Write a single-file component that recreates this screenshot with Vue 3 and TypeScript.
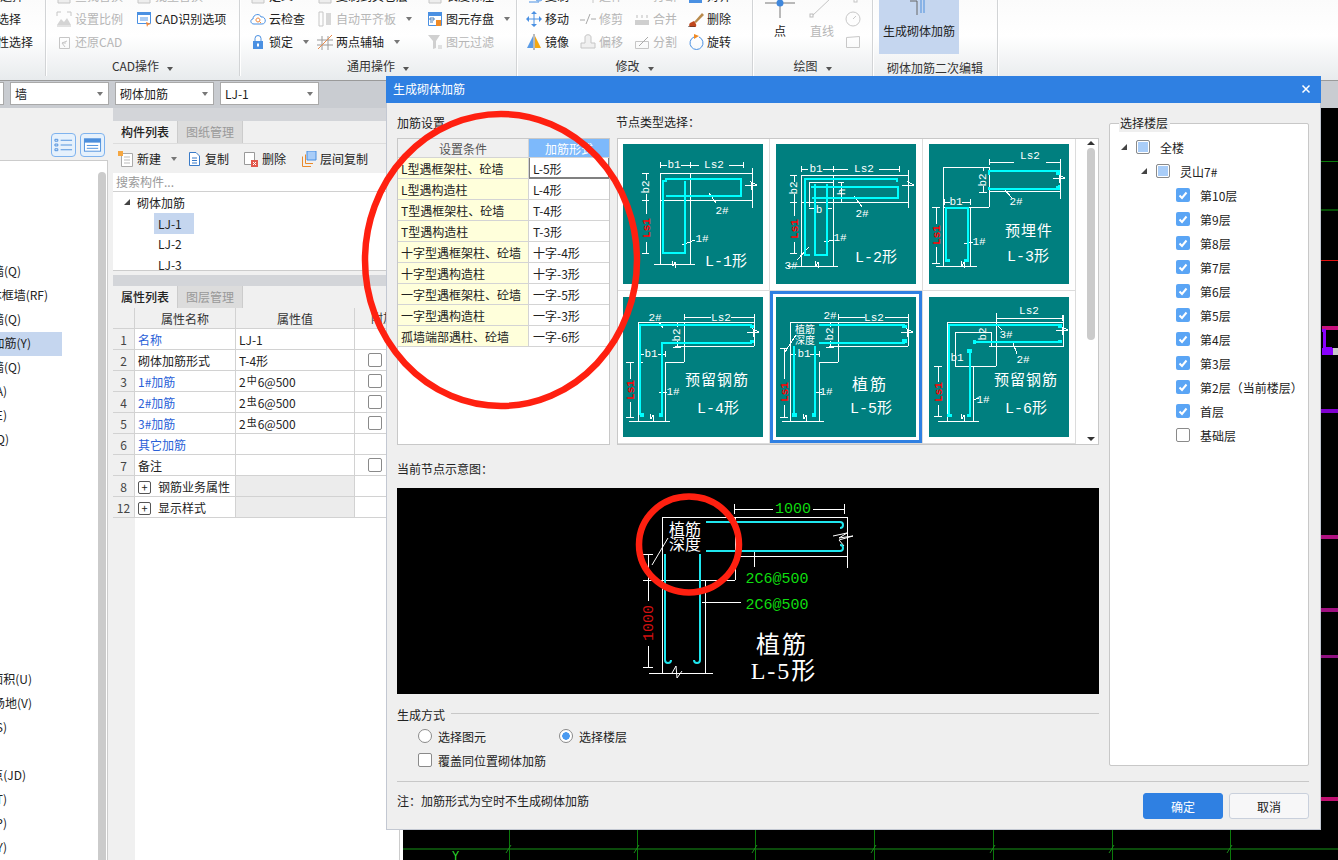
<template>
  <div class="app">
    <header class="ribbon">
      <section v-for="group in ribbonGroups" :key="group.label" class="rib-group" :style="{ width: group.width + 'px' }">
        <div class="rib-tools" :style="{ paddingLeft: group.pad + 'px', gridTemplateColumns: group.cols }">
          <div v-for="tool in group.tools" :key="tool.text" class="tool" :class="{ off: tool.off }">
            <svg class="tool-icon" viewBox="0 0 16 16">
              <path v-for="(s, i) in icons[tool.icon]" :key="i" :d="s.d" :fill="s.f || 'none'" :stroke="s.s || 'none'" />
            </svg>
            <span>{{ tool.text }}</span>
            <i v-if="tool.arrow" class="caret"></i>
          </div>
        </div>
        <div class="rib-label">{{ group.label }}<i class="caret dark"></i></div>
      </section>

      <section class="rib-group first-group" style="order: -1">
        <div class="clip-tools">
          <div v-for="row in firstGroup" :key="row.text" class="clip-row" :style="{ width: row.end + 'px' }">{{ row.text }}</div>
        </div>
      </section>

      <section class="rib-group draw-group">
        <div class="draw-tools">
          <div class="draw-big point">
            <svg viewBox="0 0 30 20" class="draw-icon">
              <path d="M0 3H30M15 3V18" stroke="#777" fill="none" />
              <circle cx="15" cy="3" r="3.500" fill="#3f87dc" />
            </svg>
            <span>点</span>
          </div>
          <div class="draw-big line off">
            <svg viewBox="0 0 30 20" class="draw-icon">
              <path d="M5 16L24 -2" stroke="#c4c4c4" fill="none" />
              <rect x="3" y="14" width="3" height="3" fill="#fff" stroke="#bbb" />
            </svg>
            <span>直线</span>
          </div>
          <div class="draw-small">
            <svg viewBox="0 0 16 16" class="mini"><rect x="9" y="11" width="3" height="3" fill="#fff" stroke="#c4c4c4" /></svg>
            <svg viewBox="0 0 16 16" class="mini"><circle cx="8" cy="8" r="7" fill="none" stroke="#c8c8c8" /><path d="M8 8L11 5" stroke="#c8c8c8" /></svg>
            <svg viewBox="0 0 16 16" class="mini"><path d="M1.500 3.500L14.500 2.500V13.500H1.500Z" fill="none" stroke="#c8c8c8" /></svg>
          </div>
        </div>
        <div class="rib-label">绘图<i class="caret dark"></i></div>
      </section>

      <section class="rib-group edit-group">
        <div class="edit-tool">
          <svg viewBox="0 0 80 20" class="draw-icon wide">
            <path d="M31 1H38V15" fill="none" stroke="#666" />
            <path d="M42 0V13M45 0V13" fill="none" stroke="#4d8fdc" />
          </svg>
          <span>生成砌体加筋</span>
        </div>
        <div class="rib-label edit-label">砌体加筋二次编辑</div>
      </section>
    </header>

    <div class="combo-bar">
      <div class="combo stub"></div>
      <div v-for="combo in combos" :key="combo" class="combo">
        <span>{{ combo }}</span><i class="caret"></i>
      </div>
    </div>

    <main class="workspace">
      <aside class="sidebar">
        <div class="side-head">
          <button class="view-btn">
            <svg viewBox="0 0 20 18"><path d="M1 3h3v2H1zM1 8h3v2H1zM1 13h3v2H1z" fill="none" stroke="#4d8fdc" /><path d="M7 4h12M7 9h12M7 14h12" stroke="#4d8fdc" /></svg>
          </button>
          <button class="view-btn">
            <svg viewBox="0 0 20 18"><rect x="1.500" y="2.500" width="17" height="13" fill="#fff" stroke="#4d8fdc" /><rect x="1.500" y="2.500" width="17" height="4" fill="#4d8fdc" /><path d="M4 9.500h12M4 12.500h12" stroke="#4d8fdc" /></svg>
          </button>
        </div>
        <div class="side-body">
          <div class="side-list">
            <div
              v-for="(row, i) in sideRows"
              :key="i"
              class="side-row"
              :class="{ picked: row.picked }"
            >
              <span v-if="row.text" class="side-text" :style="{ width: row.end + 'px' }">{{ row.text }}</span>
            </div>
          </div>
          <div class="side-scroll"></div>
        </div>
      </aside>

      <section class="panel">
        <div class="strip"></div>
        <div class="tabs">
          <span class="tab active">构件列表</span>
          <span class="tab">图纸管理</span>
        </div>
        <div class="panel-tools">
          <span v-for="btn in panelButtons" :key="btn.text" class="panel-btn" :style="{ width: btn.width + 'px' }">
            <svg viewBox="0 0 16 16" class="tool-icon">
              <path v-for="(s, i) in icons[btn.icon]" :key="i" :d="s.d" :fill="s.f || 'none'" :stroke="s.s || 'none'" />
            </svg>
            {{ btn.text }}<i v-if="btn.arrow" class="caret"></i>
          </span>
        </div>
        <div class="search">搜索构件...</div>
        <div class="tree">
          <div class="tree-root"><i class="tri"></i>砌体加筋</div>
          <div class="tree-leaf picked">LJ-1</div>
          <div class="tree-leaf">LJ-2</div>
          <div class="tree-leaf">LJ-3</div>
        </div>
        <div class="strip lower"></div>
        <div class="tabs">
          <span class="tab active">属性列表</span>
          <span class="tab">图层管理</span>
        </div>
        <div class="props">
          <div class="prop-row head">
            <span class="c-idx"></span><span class="c-name center">属性名称</span><span class="c-val center">属性值</span><span class="c-add center">附加</span>
          </div>
          <div v-for="row in propRows" :key="row.idx" class="prop-row">
            <span class="c-idx center">{{ row.idx }}</span>
            <span class="c-name" :class="{ link: row.link }">
              <i v-if="row.group" class="plus">+</i>{{ row.name }}
            </span>
            <span class="c-val" :class="{ shade: row.group }">
              <template v-if="row.steel">2<small>{{ row.steel }}</small>6@500</template>
              <template v-else>{{ row.value }}</template>
            </span>
            <span class="c-add"><i v-if="row.check" class="box"></i></span>
          </div>
          <div class="prop-fill"><span></span></div>
        </div>
      </section>

      <div class="canvas">
        <svg viewBox="0 0 935 752" class="canvas-svg">
          <g shape-rendering="crispEdges">
            <path d="M918 53H935" stroke="#0a7a0a" />
            <path d="M918 102H935" stroke="#064f06" stroke-width="2" />
            <path d="M918 152H935" stroke="#e01010" />
            <path d="M919 220H935" stroke="#c8107c" stroke-width="4" />
            <path d="M919 222H921V240H929" stroke="#8a00ff" stroke-width="3" fill="none" />
            <rect x="919" y="240" width="11" height="7" fill="#8a00ff" />
            <rect x="930" y="240" width="5" height="7" fill="#c8c8c8" />
            <path d="M918 303H935" stroke="#8000d0" stroke-width="4" />
            <path d="M918 429H935" stroke="#b01080" stroke-width="4" />
            <path d="M918 502H935" stroke="#a01080" stroke-width="4" />
            <path d="M918 548H935" stroke="#901080" stroke-width="3" />
            <path d="M918 691H935" stroke="#c01070" stroke-width="4" />
            <path d="M0 741H935" stroke="#0b4a0b" stroke-width="2" />
            <path d="M106 722V752M234 722V752M352 722V752M471 722V752M590 722V752M709 722V752M827 722V752" stroke="#0b7a0b" />
          </g>
          <path d="M103 745l5-8M231 745l5-8M349 745l5-8M468 745l5-8M587 745l5-8M706 745l5-8M824 745l5-8" stroke="#1a8a1a" />
          <text x="49" y="752" class="axis-y">Y</text>
        </svg>
      </div>
    </main>

    <section class="dialog">
      <div class="dialog-title">
        <span>生成砌体加筋</span>
        <svg viewBox="0 0 10 10" class="close"><path d="M1.500 1.500L8.500 8.500M8.500 1.500L1.500 8.500" stroke="#fff" stroke-width="1.500" /></svg>
      </div>
      <div class="dialog-body">
        <div class="left-col">
          <div class="top-row">
            <div class="settings">
              <div class="cap">加筋设置</div>
              <div class="rule-table">
                <div class="rule-row rule-head"><span class="rule-a">设置条件</span><span class="rule-b">加筋形式</span></div>
                <div v-for="(rule, i) in rules" :key="rule.a" class="rule-row">
                  <span class="rule-a">{{ rule.a }}</span>
                  <span class="rule-b" :class="{ editing: i === 0 }">{{ rule.b }}</span>
                </div>
              </div>
            </div>
            <div class="nodes">
              <div class="cap node-cap">节点类型选择：</div>
              <div class="node-frame">
                <div class="node-grid">
                  <div v-for="(thumb, i) in thumbs" :key="i" class="node-cell" :class="{ selected: i === 4 }">
                    <svg viewBox="0 0 140 140" class="thumb">
                      <rect width="140" height="140" fill="#007f7f" />
                      <path :d="thumb.white" class="w-line" />
                      <path :d="thumb.cyan" class="c-line" />
                      <path v-if="thumb.caps" :d="thumb.caps" class="c-caps" />
                      <template v-for="(t, j) in thumb.labels" :key="j">
                        <text
                          :x="t.x"
                          :y="t.y"
                          :class="t.k || 'dim'"
                          :transform="t.rot ? `rotate(-90 ${t.x} ${t.y})` : undefined"
                        >{{ t.t }}</text>
                      </template>
                    </svg>
                  </div>
                </div>
                <div class="node-scroll">
                  <i class="arrow-up"></i>
                  <i class="thumb-bar"></i>
                  <i class="arrow-down"></i>
                </div>
              </div>
            </div>
          </div>

          <div class="cap preview-cap">当前节点示意图：</div>
          <div class="preview">
            <svg viewBox="0 0 702 206" class="preview-svg">
              <path
                class="w-line"
                d="M265 29H450M265 29V185M338 29V92M250 92H338M308 92V185M252 185H316M450 29V80M338 68H450M357 64V79
                   M337 21H376M416 21H447M337 16V26M447 16V26M251 66V113M251 158V179M246 66H256M246 92H256M246 179H256
                   M305 114H344"
              />
              <path class="w-thin" d="M271 50L255 77M275 185l4 -7 1 12 5 -7M436 48l14 -3 -8 5 14 -2 -14 4 5 6" />
              <path class="c-big" d="M309 34H443a3 3 0 0 1 0 6M309 63H443a3 3 0 0 0 0 -6M268 66V172a2.500 2.500 0 0 0 6 0M303 66V172a2.500 2.500 0 0 1 -6 0" />
              <text x="396" y="25" class="green">1000</text>
              <text x="380" y="95" class="green">2C6@500</text>
              <text x="380" y="121" class="green">2C6@500</text>
              <text x="256" y="135" class="red-big" transform="rotate(-90 256 135)">1000</text>
              <text x="288" y="47" class="cn-16">植筋</text>
              <text x="288" y="62" class="cn-16">深度</text>
              <text x="385" y="165" class="cn-26">植筋</text>
              <text x="387" y="191" class="cn-24">L-5形</text>
            </svg>
          </div>

          <div class="mode-title"><span>生成方式</span><i></i></div>
          <div class="mode-row">
            <label class="mode-item"><i class="radio"></i>选择图元</label>
            <label class="mode-item"><i class="radio on"></i>选择楼层</label>
          </div>
          <div class="mode-row second">
            <label class="mode-item"><i class="box"></i>覆盖同位置砌体加筋</label>
          </div>
        </div>

        <fieldset class="floors">
          <legend>选择楼层</legend>
          <div class="floor-row lvl0"><i class="tri"></i><i class="half"></i>全楼</div>
          <div class="floor-row lvl1"><i class="tri"></i><i class="half"></i>灵山7#</div>
          <div v-for="floor in floors" :key="floor.name" class="floor-row lvl2">
            <i class="fcheck" :class="{ on: floor.on }">
              <svg v-if="floor.on" viewBox="0 0 14 14"><path d="M3.500 7.500L6 10L10.500 4.500" fill="none" stroke="#fff" stroke-width="2" /></svg>
            </i>{{ floor.name }}
          </div>
        </fieldset>
      </div>
      <div class="dialog-foot">
        <span class="note">注：加筋形式为空时不生成砌体加筋</span>
        <div class="foot-btns">
          <button class="btn primary">确定</button>
          <button class="btn">取消</button>
        </div>
      </div>
    </section>

    <svg class="marks" viewBox="0 0 1338 860">
      <ellipse cx="501" cy="260" rx="136" ry="146" />
      <ellipse cx="689" cy="544.500" rx="50" ry="48" />
    </svg>
  </div>
</template>

<script setup lang="ts">
type Shape = { d: string; f?: string; s?: string }
type Tool = { text: string; icon: string; off?: boolean; arrow?: boolean }
type Label = { x: number; y: number; t: string; k?: string; rot?: boolean }

const gray = '#c6c6c6'
const blue = '#4a90e2'

const icons: Record<string, Shape[]> = {
  blank: [{ d: 'M2 9.500H14V15H2Z', f: '#eee', s: gray }],
  ratio: [
    { d: 'M1 5V1H5M11 1H15V5M1 15H15', s: gray },
    { d: 'M1 14L5 8L8 11L11 7L15 14Z', f: '#d4d4d4' }
  ],
  cadopt: [
    { d: 'M1.500 1.500H14.500V12.500H1.500Z', f: '#fff', s: '#4a90e2' },
    { d: 'M1 1H15V4H1Z', f: '#4a90e2' },
    { d: 'M4 6H12V10H4Z', f: '#a9cbf3' },
    { d: 'M10 11L15 13L12 14L11 16Z', f: '#f0873a' }
  ],
  restore: [
    { d: 'M3.500 3.500H13.500V14.500H3.500Z', s: gray },
    { d: 'M11 7L6 9L9 13M6 9H10', s: gray }
  ],
  cloud: [
    { d: 'M4 13C0 13 0 8 3 8C3 3 10 2 11 6C16 5 17 13 12 13Z', f: '#fff', s: blue },
    { d: 'M8 7A2 2 0 1 1 7.900 7M9.500 10.500L11 12', s: '#f0873a' }
  ],
  align: [
    { d: 'M2 1H6V15H2Z', s: gray },
    { d: 'M9 2H14V14H9Z', f: '#d8d8d8' }
  ],
  save: [
    { d: 'M1.500 1.500H14.500V14.500H1.500Z', f: '#fff', s: blue },
    { d: 'M1 1H15V5H1Z', f: blue },
    { d: 'M3 7H7V9H3ZM3 11H6', s: '#4a7fb8' },
    { d: 'M9 9H14V15H9Z', f: '#f08a24' }
  ],
  lock: [
    { d: 'M5 7V4.500A3 3 0 0 1 11 4.500V7', s: blue },
    { d: 'M3 7H13V15H3Z', f: blue },
    { d: 'M7 9.500H9V12.500H7Z', f: '#fff' }
  ],
  axis: [
    { d: 'M0 6H16M0 11H16M5 2V16M11 2V16', s: '#9a9a9a' },
    { d: 'M1 15L15 1', s: '#e98a4a' }
  ],
  filter: [
    { d: 'M1 1H13L9 7V14L6 15V7Z', f: '#d0d0d0' },
    { d: 'M11 12H15M11 14H15', s: gray }
  ],
  copy: [{ d: 'M8 8A5 5 0 1 0 8 7.900M3 14H13', s: blue }],
  extend: [{ d: 'M1 9H8M10 9H15M13 8V15', s: gray }],
  cut: [{ d: 'M1 10H5M7 10H15', s: gray }],
  align2: [{ d: 'M1 8H14V15H1Z', f: blue }],
  move: [
    { d: 'M8 1V15M1 8H15', s: blue },
    { d: 'M8 0L11 3H5ZM8 16L5 13H11ZM0 8L3 5V11ZM16 8L13 11V5Z', f: blue }
  ],
  trim: [{ d: 'M0 9H5M6 13L10 3M11 8H16', s: '#a8a8a8' }],
  merge: [
    { d: 'M1 9H15V14H1Z', f: '#cfcfcf' },
    { d: 'M3 4V7M8 4V7M13 4V7', s: '#bdbdbd' }
  ],
  brush: [
    { d: 'M6 11L14 2L16 4L8 12Z', f: '#b98a4c' },
    { d: 'M2 12A3.500 3.500 0 1 0 8 13L6 10Z', f: '#c0471c' },
    { d: 'M0 16H7', s: '#333' }
  ],
  mirror: [
    { d: 'M7 2V14H1Z', f: '#5a9be6' },
    { d: 'M9 2V14H15Z', f: '#f3a712' },
    { d: 'M8 0V16', s: '#777' }
  ],
  offset: [{ d: 'M1 14V9H5V3C5 0 11 0 11 3V9H15V14Z', f: '#f0f0f0', s: gray }],
  split: [
    { d: 'M1.500 7.500H14.500V14.500H1.500Z', s: gray },
    { d: 'M5 12L14 3', s: '#aaa' }
  ],
  rotate: [
    { d: 'M6 3A6.500 6.500 0 1 0 11 3', s: blue },
    { d: 'M6 0L11 2L6 5Z', f: '#f08a24' }
  ],
  newdoc: [
    { d: 'M3.500 2.500H14.500V15.500H3.500Z', f: '#fff', s: '#aaa' },
    { d: 'M6 6H12M6 9H12M6 12H12', s: '#bbb' },
    { d: 'M0 0H5V5H0Z', f: '#f5a742' }
  ],
  dup: [
    { d: 'M3.500 1.500H10L13.500 5V14.500H3.500Z', f: '#fff', s: '#3a7bc8' },
    { d: 'M6 7H11M6 9.500H11M6 12H11', s: '#3a7bc8' }
  ],
  del: [
    { d: 'M1.500 1.500H11.500V13.500H1.500Z', f: '#fff', s: '#999' },
    { d: 'M8 9H15V16H8Z', f: '#e2574c' },
    { d: 'M10 11L13 14M13 11L10 14', s: '#fff' }
  ],
  floorcopy: [
    { d: 'M1.500 5.500V15.500H10M4.500 3.500V12.500H12', s: '#e98a2c' },
    { d: 'M6 0H15V9H6Z', f: '#a9cdf8', s: blue }
  ]
}

const ribbonGroups: { label: string; width: number; pad: number; cols: string; tools: Tool[] }[] = [
  {
    label: 'CAD操作',
    width: 194,
    pad: 10,
    cols: '80px 1fr',
    tools: [
      { text: '查找替换', icon: 'blank', off: true },
      { text: '批量替换', icon: 'blank', off: true },
      { text: '设置比例', icon: 'ratio', off: true },
      { text: 'CAD识别选项', icon: 'cadopt' },
      { text: '还原CAD', icon: 'restore', off: true }
    ]
  },
  {
    label: '通用操作',
    width: 277,
    pad: 10,
    cols: '67px 110px 1fr',
    tools: [
      { text: '定义', icon: 'blank' },
      { text: '复制到其它层', icon: 'blank' },
      { text: '长度标注', icon: 'blank' },
      { text: '云检查', icon: 'cloud' },
      { text: '自动平齐板', icon: 'align', off: true, arrow: true },
      { text: '图元存盘', icon: 'save', arrow: true },
      { text: '锁定', icon: 'lock', arrow: true },
      { text: '两点辅轴', icon: 'axis', arrow: true },
      { text: '图元过滤', icon: 'filter', off: true }
    ]
  },
  {
    label: '修改',
    width: 236,
    pad: 9,
    cols: '54px 54px 54px 1fr',
    tools: [
      { text: '复制', icon: 'copy' },
      { text: '延伸', icon: 'extend', off: true },
      { text: '打断', icon: 'cut', off: true },
      { text: '对齐', icon: 'align2' },
      { text: '移动', icon: 'move' },
      { text: '修剪', icon: 'trim', off: true },
      { text: '合并', icon: 'merge', off: true },
      { text: '删除', icon: 'brush' },
      { text: '镜像', icon: 'mirror' },
      { text: '偏移', icon: 'offset', off: true },
      { text: '分割', icon: 'split', off: true },
      { text: '旋转', icon: 'rotate' }
    ]
  }
]

const firstGroup = [
  { text: '批量选择', end: 24 },
  { text: '按属性选择', end: 21 },
  { text: '按图元属性选择', end: 33 }
]

const combos = ['墙', '砌体加筋', 'LJ-1']

const sideLabels: [string, number, boolean?][] = [
  ['砌体墙(Q)', 21],
  ['砌体框墙(RF)', 48],
  ['暗柱墙(Q)', 21],
  ['砌体加筋(Y)', 31, true],
  ['保温墙(Q)', 21],
  ['梁(A)', 7],
  ['板(E)', 7],
  ['墙(Q)', 9]
]
const sideLower: [string, number][] = [
  ['建筑面积(U)', 32],
  ['天井场地(V)', 32],
  ['散水(S)', 7],
  ['', 0],
  ['建筑节点(JD)', 26],
  ['台阶(T)', 7],
  ['坡道(P)', 7],
  ['栏杆(Y)', 7]
]
const toRow = ([text, end, picked]: [string, number, boolean?]) => ({ text, end, picked })
const sideRows = [
  ...sideLabels.map(toRow),
  ...Array.from({ length: 9 }, () => toRow(['', 0])),
  ...sideLower.map((r) => toRow(r))
]

const panelButtons = [
  { text: '新建', icon: 'newdoc', width: 68, arrow: true },
  { text: '复制', icon: 'dup', width: 57 },
  { text: '删除', icon: 'del', width: 58 },
  { text: '层间复制', icon: 'floorcopy', width: 80 }
]

const propRows: { idx: number; name: string; value?: string; link?: boolean; check?: boolean; steel?: string; group?: boolean }[] = [
  { idx: 1, name: '名称', value: 'LJ-1', link: true },
  { idx: 2, name: '砌体加筋形式', value: 'T-4形', check: true },
  { idx: 3, name: '1#加筋', steel: '中', link: true, check: true },
  { idx: 4, name: '2#加筋', steel: '虫', link: true, check: true },
  { idx: 5, name: '3#加筋', steel: '虫', link: true, check: true },
  { idx: 6, name: '其它加筋', link: true },
  { idx: 7, name: '备注', check: true },
  { idx: 8, name: '钢筋业务属性', group: true },
  { idx: 12, name: '显示样式', group: true }
]

const rules = [
  { a: 'L型遇框架柱、砼墙', b: 'L-5形' },
  { a: 'L型遇构造柱', b: 'L-4形' },
  { a: 'T型遇框架柱、砼墙', b: 'T-4形' },
  { a: 'T型遇构造柱', b: 'T-3形' },
  { a: '十字型遇框架柱、砼墙', b: '十字-4形' },
  { a: '十字型遇构造柱', b: '十字-3形' },
  { a: '一字型遇框架柱、砼墙', b: '一字-5形' },
  { a: '一字型遇构造柱', b: '一字-3形' },
  { a: '孤墙端部遇柱、砼墙', b: '一字-6形' }
]

const thumbs: { white: string; cyan: string; caps?: string; labels: Label[] }[] = [
  {
    white:
      'M37 29H129M37 29V120M67 29V120M31 120H72M37 56H129M129 24V64M37 21H44M58 21H76M106 21H120M37 18V24M67 18V24M120 18V24M23 29V36M23 50V70M23 98V109M19 29H26M19 56H26M19 109H26M86 49L93 59M59 101L72 96M49 117l1 5 2-4 1 6M122 42l12-1-6-3 1 8',
    cyan: 'M62 37V109H40V37H44M42 35H118V52H43',
    labels: [
      { x: 51, y: 24, t: 'b1' },
      { x: 91, y: 24, t: 'Ls2' },
      { x: 26, y: 43, t: 'b2', rot: true },
      { x: 27, y: 84, t: 'Ls1', rot: true, k: 'dim-red' },
      { x: 99, y: 70, t: '2#' },
      { x: 79, y: 98, t: '1#' },
      { x: 103, y: 122, t: 'L-1形', k: 'name' }
    ]
  },
  {
    white:
      'M25 31H132M25 31V122M57 31V122M12 122H62M25 58H132M132 26V64M33 38H57M33 38V63M25 25H32M47 25H72M103 25H123M25 22V28M57 22V28M123 22V28M18 31V38M18 50V72M18 98V109M14 31H21M14 58H21M14 109H21M33 64H38M50 64H56M65 38V58M62 38H68M62 58H68M78 52L86 63M48 98L58 96M33 103L21 116M39 117l1 5 2-4 1 6M126 42l12-1-6-3 1 8',
    cyan: 'M34 111H29V35H121V38M35 43H122V54H36M39 40V111H51V40',
    labels: [
      { x: 40, y: 28, t: 'b1' },
      { x: 88, y: 28, t: 'Ls2' },
      { x: 21, y: 44, t: 'b2', rot: true },
      { x: 22, y: 85, t: 'Ls1', rot: true, k: 'dim-red' },
      { x: 43, y: 69, t: 'b' },
      { x: 69, y: 48, t: 'h', rot: true },
      { x: 86, y: 73, t: '2#' },
      { x: 64, y: 97, t: '1#' },
      { x: 15, y: 125, t: '3#' },
      { x: 100, y: 118, t: 'L-2形', k: 'name' }
    ]
  },
  {
    white:
      'M14 23H60M14 23V122M60 23V63M14 63H60M41 63V122M7 122H48M60 47H131M131 16V55M60 18H85M117 18H131M60 15V21M131 15V21M7 63V80M7 103V119M3 63H11M3 119H11M54 23V27M54 42V48M50 48H58M15 58H21M33 58H41M15 55V61M41 55V61M74 44L83 54M35 100L44 98M32 117l1 5 2-4 1 6M124 35l12-1-6-3 1 8',
    cyan: 'M60 31V27H130V30M60 43V45H130V41M19 117H17V64H39V117H36',
    caps: 'M17 115H21V118H17ZM35 115H39V118H35ZM127 27H131V31H127ZM127 42H131V46H127Z',
    labels: [
      { x: 101, y: 15, t: 'Ls2' },
      { x: 57, y: 36, t: 'b2', rot: true },
      { x: 27, y: 61, t: 'b1' },
      { x: 11, y: 91, t: 'Ls1', rot: true, k: 'dim-red' },
      { x: 87, y: 61, t: '2#' },
      { x: 50, y: 101, t: '1#' },
      { x: 100, y: 92, t: '预埋件', k: 'cn' },
      { x: 99, y: 117, t: 'L-3形', k: 'name' }
    ]
  },
  {
    white:
      'M15 25H131M15 25V124M61 25V65M42 65H61M15 65H20M42 65V124M6 124H47M52 49H131M131 18V49M61 20H88M108 20H131M61 17V23M131 17V23M7 65V82M7 105V120M3 65H11M3 120H11M54 25V30M54 44V50M50 50H58M15 57H21M35 57H42M15 54V60M42 54V60M36 25L40 31M36 96L44 95M27 117l1 5 2-4 1 6M124 36l12-1-6-3 1 8',
    cyan: 'M129 28H17V118M129 46H39V118',
    caps: 'M17 116H21V120H17ZM36 116H40V120H36ZM127 28H131V31H127ZM127 43H131V46H127Z',
    labels: [
      { x: 32, y: 24, t: '2#' },
      { x: 98, y: 24, t: 'Ls2' },
      { x: 57, y: 38, t: 'b2', rot: true },
      { x: 28, y: 60, t: 'b1' },
      { x: 11, y: 93, t: 'Ls1', rot: true, k: 'dim-red' },
      { x: 50, y: 98, t: '1#' },
      { x: 94, y: 88, t: '预留钢筋', k: 'cn' },
      { x: 95, y: 116, t: 'L-4形', k: 'name' }
    ]
  },
  {
    white:
      'M14 25H132M14 25V124M62 25V65M43 65H62M43 65V124M6 124H48M53 49H132M132 18V49M62 20H89M109 20H132M62 17V23M132 17V23M8 51V82M8 108V120M4 51H12M4 120H12M54 25V30M54 44V50M50 50H58M14 57H20M34 57H43M14 54V60M43 54V60M20 38L9 55M38 96L46 95M27 117l1 5 2-4 1 6M125 36l12-1-6-3 1 8',
    cyan: 'M43 28H129M43 46H129M18 49V118M39 49V118',
    caps: 'M16 116H21V120H16ZM36 116H40V120H36ZM126 28H131V31H126ZM126 42H131V46H126Z',
    labels: [
      { x: 54, y: 22, t: '2#' },
      { x: 98, y: 24, t: 'Ls2' },
      { x: 57, y: 37, t: 'b2', rot: true },
      { x: 28, y: 60, t: 'b1' },
      { x: 12, y: 95, t: 'Ls1', rot: true, k: 'dim-red' },
      { x: 50, y: 98, t: '1#' },
      { x: 29, y: 36, t: '植筋', k: 'cn-small' },
      { x: 29, y: 47, t: '深度', k: 'cn-small' },
      { x: 94, y: 93, t: '植筋', k: 'cn-wide' },
      { x: 95, y: 116, t: 'L-5形', k: 'name' }
    ]
  },
  {
    white:
      'M18 25H134M18 25V124M134 18V50M60 49H134M26 35H62M26 35V69M26 69H67M67 16V69M44 69V124M9 124H50M62 35V49M67 21H133M67 18V24M133 18V24M9 69V85M9 108V119M5 69H13M5 119H13M69 29L73 33M84 46L88 57M44 103L50 101M32 117l1 5 2-4 1 6M127 34l12-1-6-3 1 8',
    cyan: 'M133 28H20V118M133 45H44M41 53V118',
    caps: 'M18 117H23V120H18ZM38 117H42V120H38ZM38 52H43V56H38ZM129 28H133V31H129ZM44 43H47V47H44ZM129 43H133V46H129Z',
    labels: [
      { x: 100, y: 17, t: 'Ls2' },
      { x: 57, y: 37, t: 'b2', rot: true },
      { x: 77, y: 41, t: '3#' },
      { x: 28, y: 64, t: 'b1' },
      { x: 94, y: 66, t: '2#' },
      { x: 13, y: 95, t: 'Ls1', rot: true, k: 'dim-red' },
      { x: 54, y: 106, t: '1#' },
      { x: 97, y: 88, t: '预留钢筋', k: 'cn' },
      { x: 97, y: 116, t: 'L-6形', k: 'name' }
    ]
  }
]

const floors = [
  ...['第10层', '第9层', '第8层', '第7层', '第6层', '第5层', '第4层', '第3层', '第2层（当前楼层）', '首层'].map((name) => ({ name, on: true })),
  { name: '基础层', on: false }
]
</script>

<style>
html,
body {
  margin: 0;
  overflow: hidden;
}
</style>

<style scoped>
.app {
  position: relative;
  width: 1338px;
  height: 860px;
  overflow: hidden;
  font-family: 'Noto Sans CJK SC', 'Liberation Sans', sans-serif;
  font-size: 12px;
  color: #222;
  background: #fff;
}

i {
  display: inline-block;
  font-style: normal;
}

.caret {
  width: 0;
  height: 0;
  margin-left: 7px;
  border: 3.500px solid transparent;
  border-top: 4px solid #777;
  border-bottom: 0;
}

.caret.dark {
  margin-left: 8px;
  border-top-color: #555;
}

/* ribbon */
.ribbon {
  display: flex;
  height: 80px;
  overflow: hidden;
  background: linear-gradient(#fbfbfb, #fff 45%, #e8ebed);
}

.rib-group {
  position: relative;
  flex: none;
  box-sizing: border-box;
  height: 76px;
  border-right: 1px solid #d2d4d6;
  box-shadow: 1px 0 0 #fff;
}

.first-group {
  width: 46px;
}

.clip-tools {
  margin-top: -16px;
}

.clip-row {
  height: 23px;
  line-height: 23px;
  overflow: hidden;
  white-space: nowrap;
  direction: rtl;
  text-align: right;
}

.rib-tools {
  display: grid;
  grid-auto-rows: 23px;
  margin-top: -16px;
  overflow: hidden;
}

.rib-group > .rib-tools {
  height: 69px;
}

.tool {
  display: flex;
  align-items: center;
  gap: 3px;
  white-space: nowrap;
}

.tool.off {
  color: #b6b6b6;
}

.tool-icon {
  flex: none;
  width: 16px;
  height: 16px;
}

.rib-label {
  position: absolute;
  left: 0;
  right: 0;
  top: 56px;
  height: 19px;
  line-height: 19px;
  text-align: center;
  color: #333;
}

.draw-group {
  width: 120px;
}

.draw-tools {
  display: flex;
}

.draw-big {
  display: flex;
  flex-direction: column;
  align-items: center;
}

.draw-big.point {
  width: 54px;
}

.draw-big.line {
  width: 30px;
  color: #b6b6b6;
}

.draw-big span {
  height: 22px;
  line-height: 22px;
}

.draw-icon {
  display: block;
  width: 30px;
  height: 20px;
  overflow: visible;
}

.draw-icon.wide {
  width: 80px;
}

.draw-small {
  display: flex;
  flex-direction: column;
  align-items: center;
  width: 32px;
  margin-top: -16px;
}

.mini {
  width: 16px;
  height: 16px;
  margin: 3.500px 0;
}

.edit-group {
  width: 125px;
}

.edit-tool {
  display: flex;
  flex-direction: column;
  align-items: center;
  width: 80px;
  height: 54px;
  margin-left: 6px;
  background: #c5d6ef;
}

.edit-tool span {
  height: 22px;
  line-height: 22px;
}

.edit-label {
  top: 58px;
}

/* combo bar */
.combo-bar {
  display: flex;
  align-items: center;
  gap: 6px;
  height: 28px;
  padding-bottom: 2px;
  box-sizing: border-box;
  background: #c9ccd1;
  border-top: 1px solid #9a9a9a;
}

.combo {
  display: flex;
  align-items: center;
  justify-content: space-between;
  box-sizing: border-box;
  width: 99px;
  height: 23px;
  padding: 0 5px 0 4px;
  background: #fff;
  border: 1px solid #a9a9a9;
}

.combo.stub {
  width: 4px;
  padding: 0;
  border-left: 0;
}

/* workspace */
.workspace {
  display: flex;
  height: 752px;
  overflow: hidden;
}

.sidebar {
  display: flex;
  flex-direction: column;
  flex: none;
  box-sizing: border-box;
  width: 113px;
  background: #f0f0f0;
}

.side-head {
  display: flex;
  justify-content: flex-end;
  gap: 4px;
  box-sizing: border-box;
  width: 108px;
  height: 53px;
  padding: 25px 3px 0 0;
  border-bottom: 1px solid #ccc;
}

.view-btn {
  box-sizing: border-box;
  width: 25px;
  height: 24px;
  padding: 2px;
  background: #e6f1fc;
  border: 1px solid #7fb3ee;
  border-radius: 4px;
}

.view-btn svg {
  display: block;
  width: 100%;
  height: 100%;
}

.side-body {
  position: relative;
  flex: 1;
  width: 108px;
  display: flex;
  background: #fff;
  border-right: 1px solid #ccc;
  box-sizing: border-box;
  min-height: 0;
}

.side-list {
  flex: 1;
  padding-top: 99px;
}

.side-row {
  width: 62px;
  height: 24px;
  line-height: 22px;
}

.side-row.picked {
  background: #c5d6ef;
}

.side-text {
  display: block;
  overflow: hidden;
  white-space: nowrap;
  direction: rtl;
  text-align: right;
}

.side-scroll {
  flex: none;
  width: 8px;
  margin: 11px 1px 0 0;
  background: #cbcbcb;
  border-radius: 4px 4px 0 0;
}

.panel {
  display: flex;
  flex-direction: column;
  flex: none;
  box-sizing: border-box;
  width: 287px;
  border-right: 1px solid #ccc;
  background: #f0f0f0;
}

.strip {
  height: 13px;
  background: #d3d5d9;
}

.strip.lower {
  height: 11px;
  margin-top: 4px;
}

.tabs {
  display: flex;
  height: 22px;
  background: #f0f0f0;
}

.tab {
  width: 65px;
  line-height: 21px;
  text-align: center;
  color: #999;
  background: #dcdcdc;
  border-right: 1px solid #ccc;
  box-sizing: border-box;
}

.tab.active {
  color: #222;
  font-weight: 500;
  background: #f0f0f0;
}

.panel-tools {
  display: flex;
  align-items: center;
  height: 30px;
  padding-left: 5px;
  border-top: 1px solid #ddd;
  box-sizing: border-box;
}

.panel-btn {
  display: flex;
  align-items: center;
  gap: 3px;
  flex: none;
}

.search {
  box-sizing: border-box;
  height: 19px;
  padding-left: 3px;
  line-height: 18px;
  color: #999;
  background: #fff;
  border-bottom: 1px solid #d0d0d0;
}

.tree {
  height: 79px;
  overflow: hidden;
  background: #fff;
  border-bottom: 1px solid #ccc;
  box-sizing: border-box;
}

.tree-root {
  display: flex;
  align-items: center;
  height: 20px;
  margin-bottom: 1px;
  padding-left: 11px;
}

.tri {
  flex: none;
  width: 6px;
  height: 6px;
  margin-right: 9px;
  background: #444;
  clip-path: polygon(100% 0, 100% 100%, 0 100%);
}

.tree-root .tri {
  margin-right: 7px;
}

.tree-leaf {
  width: 40px;
  height: 21px;
  margin-left: 41px;
  padding-left: 4px;
  line-height: 20px;
  box-sizing: border-box;
}

.tree-leaf.picked {
  background: #c5d6ef;
  line-height: 21px;
}

.props {
  display: flex;
  flex-direction: column;
  flex: 1;
  min-height: 0;
  background: #fff;
}

.prop-row {
  display: flex;
  flex: none;
  height: 21px;
  line-height: 18px;
}

.prop-row > span {
  flex: none;
  box-sizing: border-box;
  display: flex;
  align-items: center;
  padding-top: 2px;
  padding-left: 3px;
  border-right: 1px solid #d2d2d2;
  border-bottom: 1px solid #d2d2d2;
  white-space: nowrap;
  overflow: hidden;
}

.prop-row.head > span {
  background: #f0f0f0;
  color: #333;
}

.c-idx {
  width: 22px;
  background: #f0f0f0;
}

.c-name {
  width: 101px;
}

.c-val {
  width: 119px;
}

.c-add {
  width: 44px;
}

.prop-row > .center {
  justify-content: center;
  padding-left: 0;
}

.prop-row > .c-idx {
  padding-left: 0;
  color: #444;
}

.prop-row > .link {
  color: #2a5fd8;
}

.prop-row > .shade {
  background: #ececec;
}

.prop-row > .c-add {
  padding-top: 0;
  padding-left: 13px;
}

.prop-row small {
  align-self: flex-start;
  margin: 0 1px;
  font-size: 10px;
  line-height: 14px;
}

.plus {
  width: 11px;
  height: 11px;
  margin-right: 7px;
  border: 1px solid #555;
  border-radius: 2px;
  font-size: 11px;
  line-height: 10px;
  text-align: center;
}

.box {
  flex: none;
  box-sizing: border-box;
  width: 14px;
  height: 14px;
  background: #fff;
  border: 1px solid #8a8a8a;
  border-radius: 2px;
}

.prop-fill {
  flex: 1;
}

.prop-fill span {
  display: block;
  width: 22px;
  height: 100%;
  background: #f0f0f0;
}

.canvas {
  flex: none;
  width: 935px;
  margin-left: 3px;
  background: #000;
}

.canvas-svg {
  display: block;
  width: 935px;
  height: 752px;
}

.axis-y {
  fill: #2ddb2d;
  font-size: 12px;
  font-family: 'Liberation Mono', monospace;
}

/* dialog */
.dialog {
  position: absolute;
  left: 386px;
  top: 76px;
  display: flex;
  flex-direction: column;
  box-sizing: border-box;
  width: 935px;
  height: 754px;
  background: #efefef;
  border: 1px solid #c3c8d2;
  border-top: 0;
}

.dialog-title {
  display: flex;
  align-items: center;
  justify-content: space-between;
  flex: none;
  box-sizing: border-box;
  height: 27px;
  margin: 0 -1px;
  padding: 0 10px 2px 7px;
  color: #fff;
  background: #2f80e2;
}

.close {
  width: 10px;
  height: 10px;
}

.dialog-body {
  display: flex;
  gap: 10px;
  flex: none;
  box-sizing: border-box;
  height: 678px;
  padding: 11px 11px 0 10px;
}

.left-col {
  flex: none;
  width: 702px;
}

.top-row {
  display: flex;
  gap: 7px;
}

.settings {
  width: 213px;
}

.nodes {
  width: 482px;
}

.cap {
  height: 16px;
  margin-bottom: 8px;
  line-height: 17px;
  color: #222;
}

.node-cap {
  line-height: 16px;
  margin-left: -1px;
}

.rule-table {
  box-sizing: border-box;
  height: 307px;
  background: #fff;
  border: 1px solid #c8c8c8;
}

.rule-row {
  display: flex;
  height: 21px;
}

.rule-head {
  height: 19px;
}

.rule-a,
.rule-b {
  box-sizing: border-box;
  padding-top: 1px;
  line-height: 19px;
  white-space: nowrap;
  border-bottom: 1px solid #d4d4d4;
}

.rule-a {
  width: 131px;
  padding-left: 3px;
  background: #ffffdb;
  border-right: 1px solid #d4d4d4;
}

.rule-b {
  width: 80px;
  padding-left: 4px;
}

.rule-head .rule-a {
  padding: 1px 0 0;
  line-height: 18px;
  text-align: center;
  color: #555;
  background: #f0f0f0;
}

.rule-head .rule-b {
  padding: 1px 0 0;
  line-height: 18px;
  text-align: center;
  color: #fff;
  background: #7db9fb;
}

.rule-b.editing {
  padding-left: 3px;
  line-height: 19px;
  border: 1px solid #808080;
  border-top: 0;
  border-bottom-width: 2px;
}

.node-frame {
  display: flex;
  box-sizing: border-box;
  height: 307px;
  background: #fff;
  border: 1px solid #c8c8c8;
}

.node-grid {
  display: grid;
  flex: none;
  grid-template-columns: 151px 152px 152px;
  grid-template-rows: 151px 152px;
  gap: 1px;
  height: 305px;
  padding-bottom: 1px;
  box-sizing: border-box;
  background: #dcdcdc;
  border-right: 1px solid #dcdcdc;
}

.node-cell {
  box-sizing: border-box;
  padding: 5px 0 0 6px;
  background: #fff;
}

.node-cell:nth-child(3n + 1) {
  padding-left: 5px;
}

.node-cell:nth-child(n + 4) {
  padding-top: 6px;
}

.node-cell.selected {
  padding: 3px;
  border: 3px solid #2f80e2;
}

.thumb {
  display: block;
  width: 140px;
  height: 140px;
}

.w-line {
  fill: none;
  stroke: #fff;
  stroke-width: 1;
  shape-rendering: crispEdges;
}

.w-thin {
  fill: none;
  stroke: #fff;
  stroke-width: 1;
}

.c-line {
  fill: none;
  stroke: #00ffff;
  stroke-width: 2;
  shape-rendering: crispEdges;
}

.c-caps {
  fill: #00ffff;
  shape-rendering: crispEdges;
}

.c-big {
  fill: none;
  stroke: #1fe6ee;
  stroke-width: 2;
}

.dim,
.dim-red {
  fill: #fff;
  font-family: 'Liberation Mono', monospace;
  font-size: 11px;
  text-anchor: middle;
}

.dim-red {
  fill: #ff0000;
  font-weight: 700;
}

.name {
  fill: #fff;
  font-family: 'Liberation Mono', 'Noto Sans CJK SC', monospace;
  font-size: 15px;
  text-anchor: middle;
}

.cn {
  fill: #fff;
  font-size: 15px;
  letter-spacing: 1px;
  text-anchor: middle;
}

.cn-wide {
  fill: #fff;
  font-size: 16px;
  letter-spacing: 2px;
  text-anchor: middle;
}

.cn-small {
  fill: #fff;
  font-size: 10px;
  text-anchor: middle;
}

.node-scroll {
  display: flex;
  flex: 1;
  flex-direction: column;
  align-items: flex-start;
  padding: 2px 0 3px 11px;
}

.arrow-up,
.arrow-down {
  width: 0;
  height: 0;
  border: 4px solid transparent;
}

.arrow-up {
  border-bottom: 4px solid #333;
  border-top: 0;
}

.arrow-down {
  margin-top: auto;
  border-top: 4px solid #333;
  border-bottom: 0;
}

.thumb-bar {
  width: 8px;
  height: 192px;
  margin-top: 3px;
  background: #cbcbcb;
  border-radius: 4px;
}

.preview-cap {
  margin: 16px 0 11px;
  line-height: 16px;
}

.preview {
  height: 206px;
  background: #000;
}

.preview-svg {
  display: block;
  width: 702px;
  height: 206px;
}

.green {
  fill: #0fdc0f;
  font-family: 'Liberation Mono', monospace;
  font-size: 15px;
  text-anchor: middle;
}

.red-big {
  fill: #d01010;
  font-family: 'Liberation Mono', monospace;
  font-size: 15px;
  text-anchor: middle;
}

.cn-16 {
  fill: #fff;
  font-size: 16px;
  text-anchor: middle;
}

.cn-26 {
  fill: #fff;
  font-size: 24px;
  letter-spacing: 2px;
  text-anchor: middle;
}

.cn-24 {
  fill: #fff;
  font-family: 'Liberation Serif', 'Noto Sans CJK SC', serif;
  font-size: 24px;
  letter-spacing: 2px;
  text-anchor: middle;
}

.mode-title {
  display: flex;
  align-items: center;
  gap: 6px;
  height: 16px;
  margin-top: 12px;
  line-height: 15px;
}

.mode-title i {
  flex: 1;
  height: 1px;
  margin-bottom: 2px;
  background: #c8c8c8;
}

.mode-row {
  display: flex;
  height: 16px;
  margin-top: 6px;
  padding-left: 21px;
  line-height: 15px;
}

.mode-row.second {
  margin-top: 8px;
}

.mode-item {
  display: flex;
  align-items: center;
  gap: 6px;
  width: 141px;
  white-space: nowrap;
}

.radio {
  box-sizing: border-box;
  width: 14px;
  height: 14px;
  background: #fff;
  border: 1px solid #8a8a8a;
  border-radius: 50%;
}

.radio.on {
  background: radial-gradient(circle, #4a9af0 3.500px, #fff 4px);
}

.floors {
  flex: none;
  box-sizing: border-box;
  width: 200px;
  height: 652px;
  min-width: 0;
  margin: 0;
  padding: 3px 0 0;
  background: #fff;
  background-clip: padding-box;
  border: 1px solid #c8c8c8;
  border-radius: 2px;
}

.floors legend {
  margin-left: 9px;
  padding: 0 2px 0 1px;
  line-height: 18px;
  background: #efefef;
}

.floor-row {
  display: flex;
  align-items: center;
  height: 24px;
  white-space: nowrap;
}

.lvl0 {
  padding-left: 11px;
}

.lvl1 {
  padding-left: 31px;
}

.lvl2 {
  padding-left: 66px;
}

.half {
  flex: none;
  box-sizing: border-box;
  width: 14px;
  height: 14px;
  margin-right: 10px;
  background: #a9cdf8;
  border: 1px solid #8a8a8a;
  border-radius: 2px;
  box-shadow: inset 0 0 0 1px #fff;
}

.fcheck {
  flex: none;
  box-sizing: border-box;
  width: 14px;
  height: 14px;
  margin-right: 10px;
  background: #fff;
  border: 1px solid #8a8a8a;
  border-radius: 2px;
}

.fcheck.on {
  background: #5aa5f5;
  border: 0;
}

.fcheck svg {
  display: block;
  width: 14px;
  height: 14px;
}

.dialog-foot {
  display: flex;
  align-items: flex-start;
  justify-content: space-between;
  flex: 1;
  margin: 0 11px 0 10px;
  padding-top: 11px;
  border-top: 1px solid #c8c8c8;
}

.note {
  line-height: 16px;
}

.foot-btns {
  display: flex;
  gap: 6px;
}

.btn {
  box-sizing: border-box;
  width: 80px;
  height: 26px;
  padding: 0;
  font: inherit;
  color: #222;
  background: #f7f7f8;
  border: 1px solid #c9d0dc;
  border-radius: 3px;
}

.btn.primary {
  color: #fff;
  background: #2f80e2;
  border-color: #2f80e2;
}

/* hand drawn red rings on top of the screenshot */
.marks {
  position: absolute;
  left: 0;
  top: 0;
  width: 1338px;
  height: 860px;
  pointer-events: none;
}

.marks ellipse {
  fill: none;
  stroke: #ff2010;
  stroke-width: 6.500;
}
</style>
